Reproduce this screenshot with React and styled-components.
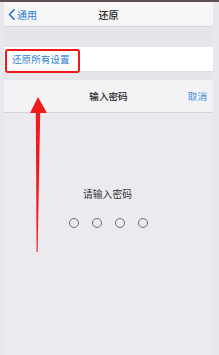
import React from 'react';
import styled, { createGlobalStyle } from 'styled-components';

const Global = createGlobalStyle`
  html, body {
    margin: 0;
    padding: 0;
    background: #e8e8ec;
    font-family: "Noto Sans CJK SC", "Noto Sans", sans-serif;
  }
`;

const Page = styled.div`
  position: relative;
  width: 219px;
  height: 355px;
  overflow: hidden;
  background: #e8e8ec;
`;

const TopStrip = styled.div`
  height: 2px;
  background: #5b5052;
`;

const Screen = styled.div`
  display: flex;
  flex-direction: column;
  margin: 0 6px 0 4px;
`;

const NavBar = styled.div`
  display: grid;
  grid-template-columns: 1fr auto 1fr;
  align-items: center;
  height: 24px;
  background: #f6f6f7;
  border-bottom: 1px solid #d9d9dd;
  font-size: 10px;
`;

const Back = styled.div`
  display: flex;
  align-items: center;
  gap: 2px;
  padding-left: 4px;
  color: #2a7ad9;
`;

const Title = styled.div`
  color: #222;
  font-weight: 500;
`;

const Band = styled.div`
  height: ${p => p.h}px;
  background: #e6e6ea;
`;

const Row = styled.div`
  display: flex;
  align-items: center;
  height: 24px;
  padding-left: 8px;
  background: #fff;
  border-bottom: 1px solid #dcdce0;
  color: #2f7fd6;
  font-size: 9.6px;
`;

const SheetHeader = styled.div`
  display: grid;
  grid-template-columns: 1fr auto 1fr;
  align-items: center;
  height: 32px;
  background: #f3f3f5;
  border-bottom: 1px solid #d6d6da;
  font-size: 9.6px;
`;

const SheetTitle = styled.div`
  grid-column: 2;
  color: #222;
  font-weight: 500;
`;

const Cancel = styled.div`
  justify-self: end;
  padding-right: 6px;
  color: #3a8be2;
`;

const SheetBody = styled.div`
  display: flex;
  flex-direction: column;
  align-items: center;
  padding-top: 74px;
  height: 242px;
  box-sizing: border-box;
  background: #ebeaef;
`;

const Prompt = styled.div`
  font-size: 9.8px;
  color: #333;
  margin-left: -2px;
`;

const Dots = styled.div`
  display: flex;
  gap: 13px;
  margin-top: 17px;
  margin-left: -1px;
`;

const Dot = styled.div`
  width: 10px;
  height: 10px;
  border: 1.3px solid #6e6e72;
  border-radius: 50%;
  box-sizing: border-box;
`;

const Highlight = styled.div`
  position: absolute;
  left: 5px;
  top: 49px;
  width: 75px;
  height: 24px;
  box-sizing: border-box;
  border: 2px solid #f01818;
  border-radius: 3px;
`;

const Arrow = styled.svg`
  position: absolute;
  left: 0;
  top: 0;
`;

export default function App() {
  return (
    <Page>
      <Global />
      <TopStrip />
      <Screen>
        <NavBar>
          <Back>
            <svg width="7" height="11" viewBox="0 0 7 11">
              <path d="M6 0.8 L1.4 5.5 L6 10.2" fill="none" stroke="#2a7ad9" strokeWidth="1.7" strokeLinecap="round" strokeLinejoin="round" />
            </svg>
            <span>通用</span>
          </Back>
          <Title>还原</Title>
          <div />
        </NavBar>
        <Band h={20} />
        <Row>还原所有设置</Row>
        <Band h={8} />
        <SheetHeader>
          <SheetTitle>输入密码</SheetTitle>
          <Cancel>取消</Cancel>
        </SheetHeader>
        <SheetBody>
          <Prompt>请输入密码</Prompt>
          <Dots>
            <Dot />
            <Dot />
            <Dot />
            <Dot />
          </Dots>
        </SheetBody>
      </Screen>
      <Highlight />
      <Arrow width="219" height="355" viewBox="0 0 219 355">
        <polygon points="38,97 30,113 47,113" fill="#f21a1a" />
        <polygon points="35.8,112 40.2,112 37.6,252 36.6,252" fill="#f21a1a" />
      </Arrow>
    </Page>
  );
}
